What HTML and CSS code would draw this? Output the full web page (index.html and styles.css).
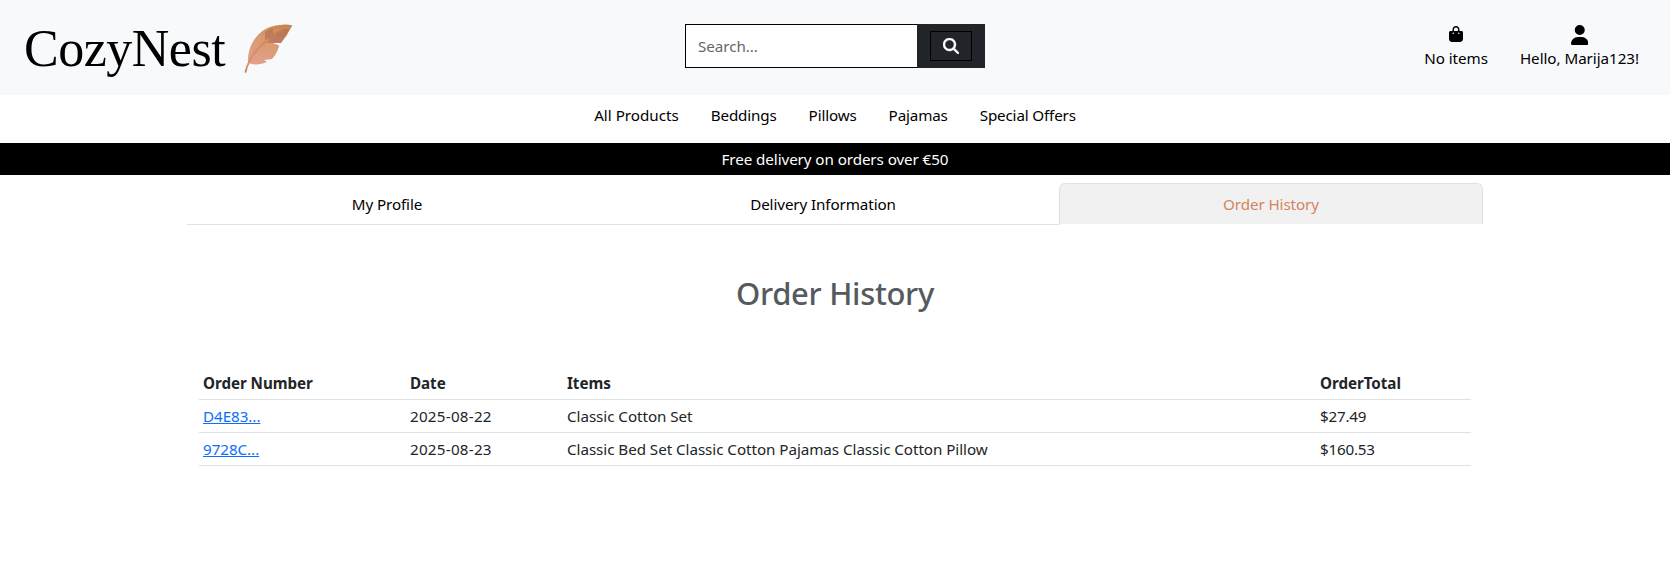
FILE: index.html
```html
<!DOCTYPE html>
<html lang="en">
<head>
<meta charset="utf-8">
<title>CozyNest - Order History</title>
<link rel="stylesheet" href="styles.css">
</head>
<body>
<header class="site-header">
  <a class="brand"><span class="brand-name">CozyNest</span>
    <svg class="feather" viewBox="0 0 50 50" width="50" height="50">
      <defs><linearGradient id="plume" x1="0.8" y1="0" x2="0.3" y2="1"><stop offset="0" stop-color="#c9834f"/><stop offset="0.45" stop-color="#d99a6c"/><stop offset="1" stop-color="#e0a08c"/></linearGradient></defs>
      <path fill="url(#plume)" d="M4 38.500 C3 21 15 2 36 1 Q43 0 48.500 1.500 Q45 6 43 11 L37 19 L28 19 L35 21.500 Q33 30 28 35 L20 36 L23 38 Q15 42 6 39.500Z"/>
      <path fill="#a9675a" opacity=".55" d="M21 8 L29 4 V12 L21 19Z M29 11 L40 5 L46 5 L37 19 H23Z"/>
      <path fill="#dc9b72" d="M20 19 H28 L35 21.500 L33 27 L18 24Z"/>
      <path fill="none" stroke="#c87d4c" stroke-width="1.700" stroke-linecap="round" d="M1.500 48 C5 34 13 24 23 16 Q31 9 40 5"/>
      <path fill="none" stroke="#e6a77b" stroke-width=".8" d="M2 45 C6 33 14 23 24 15"/>
    </svg>
  </a>
  <form class="search">
    <input class="search-input" type="text" placeholder="Search...">
    <div class="search-side"><button class="search-button" type="button" aria-label="Search">
      <svg viewBox="0 0 512 512" width="16" height="16"><path fill="#fff" stroke="#fff" stroke-width="12" d="M416 208c0 45.900-14.900 88.300-40 122.700L502.600 457.400c12.500 12.500 12.500 32.800 0 45.300s-32.800 12.500-45.300 0L330.700 376c-34.400 25.200-76.800 40-122.700 40C93.100 416 0 322.900 0 208S93.100 0 208 0S416 93.100 416 208zM208 352a144 144 0 1 0 0-288 144 144 0 1 0 0 288z"/></svg>
    </button></div>
  </form>
  <div class="account">
    <a class="account-link"><span class="icon-slot icon-bag"><svg viewBox="0 0 448 512" width="14" height="16"><path d="M160 112c0-35.300 28.700-64 64-64s64 28.700 64 64v48H160V112zm-48 48H48c-26.500 0-48 21.500-48 48V416c0 53 43 96 96 96H352c53 0 96-43 96-96V208c0-26.500-21.500-48-48-48H336V112C336 50.100 285.900 0 224 0S112 50.100 112 112v48zm24 48a24 24 0 1 1 0 48 24 24 0 1 1 0-48zm152 24a24 24 0 1 1 48 0 24 24 0 1 1 -48 0z"/></svg></span><span>No items</span></a>
    <a class="account-link"><span class="icon-slot"><svg viewBox="0 0 448 512" width="17.500" height="20"><path d="M224 256A128 128 0 1 0 224 0a128 128 0 1 0 0 256zm-45.700 48C79.800 304 0 383.800 0 482.300C0 498.700 13.300 512 29.700 512H418.300c16.400 0 29.700-13.300 29.700-29.700C448 383.800 368.200 304 269.700 304H178.300z"/></svg></span><span>Hello, Marija123!</span></a>
  </div>
</header>
<nav class="main-nav"><a class="nav-wide">All Products</a><a>Beddings</a><a>Pillows</a><a>Pajamas</a><a>Special Offers</a></nav>
<div class="banner">Free delivery on orders over €50</div>
<main class="container">
  <ul class="tabs"><li class="tab">My Profile</li><li class="tab">Delivery Information</li><li class="tab tab-active">Order History</li></ul>
  <h2 class="title">Order History</h2>
  <table class="orders">
    <colgroup><col class="col-number"><col class="col-date"><col class="col-items"><col class="col-total"></colgroup>
    <thead><tr><th>Order Number</th><th>Date</th><th>Items</th><th>OrderTotal</th></tr></thead>
    <tbody>
      <tr><td><a class="order-link">D4E83...</a></td><td class="order-date">2025-08-22</td><td>Classic Cotton Set</td><td class="order-total">$27.49</td></tr>
      <tr><td><a class="order-link">9728C...</a></td><td class="order-date">2025-08-23</td><td>Classic Bed Set Classic Cotton Pajamas Classic Cotton Pillow</td><td class="order-total">$160.53</td></tr>
    </tbody>
  </table>
</main>
</body>
</html>
```
FILE: styles.css
```css
* { box-sizing: border-box; }
body {
  margin: 0;
  background: #fff;
  color: #212529;
  font-family: "Noto Sans", "Open Sans", sans-serif;
  font-size: 15.2px;
  line-height: 24px;
  letter-spacing: -0.05px;
}
.site-header {
  display: flex;
  justify-content: space-between;
  height: 95px;
  padding: 24px 31px 0 24px;
  background: #f8f9fb;
  color: #000;
}
.brand, .account { flex: 1 1 0; }
.brand { display: flex; align-items: flex-start; gap: 19px; }
.brand-name {
  font-family: "Liberation Serif", serif;
  font-size: 52px;
  line-height: 50px;
  letter-spacing: -0.5px;
}
.search { display: flex; width: 300px; height: 44px; margin: 0 -3.5px 0 3.5px; }
.search-input {
  width: 232px;
  padding: 0 12px;
  border: 1px solid #000;
  border-right: 0;
  font: inherit;
  letter-spacing: -0.05px;
}
.search-input::placeholder { color: #666; opacity: 1; }
.search-side { width: 68px; padding: 7px 13px; background: #212529; }
.search-button {
  display: flex;
  align-items: center;
  justify-content: center;
  width: 42px;
  height: 30px;
  padding: 0;
  border: 1px solid #000;
  background: transparent;
}
.account { display: flex; justify-content: flex-end; gap: 32px; }
.account-link { display: flex; flex-direction: column; align-items: center; }
.icon-slot { display: flex; align-items: center; height: 22px; }
.icon-bag { padding-bottom: 2px; }
.main-nav {
  display: flex;
  justify-content: center;
  gap: 32px;
  height: 48px;
  padding-top: 8px;
  color: #000;
  letter-spacing: -0.15px;
}
.nav-wide { letter-spacing: 0; }
.banner { padding: 4px 0; background: #000; color: #fff; text-align: center; letter-spacing: -0.08px; }
.container { width: 1296px; margin: 8px auto 0; }
.tabs {
  display: grid;
  grid-template-columns: 400px 472px 424px;
  margin: 0;
  padding: 0;
  border-bottom: 1px solid #dee2e6;
  list-style: none;
  color: #000;
  letter-spacing: -0.1px;
  text-align: center;
}
.tab { height: 41px; padding: 9px 0 8px; }
.tab-active {
  height: 42px;
  margin-bottom: -1px;
  border: 1px solid #dee2e6;
  border-bottom-color: #fff;
  border-radius: 6px 6px 0 0;
  padding-top: 8px;
  background: #f1f1f1;
  color: #d4845c;
}
.title {
  margin: 48px 0 54px;
  color: #555a5e;
  font-size: 31px;
  font-weight: 500;
  line-height: 40px;
  letter-spacing: -0.3px;
  text-align: center;
}
.orders { width: 1272px; margin: 0 auto; border-collapse: collapse; table-layout: fixed; }
.col-number { width: 207px; }
.col-date { width: 157px; }
.col-items { width: 753px; }
.orders th, .orders td { padding: 4px; border-bottom: 1px solid #dee2e6; text-align: left; }
.orders .order-date { letter-spacing: 0.25px; }
.orders .order-total { letter-spacing: -0.2px; }
.order-link { color: #0d6efd; text-decoration: underline; }
```
